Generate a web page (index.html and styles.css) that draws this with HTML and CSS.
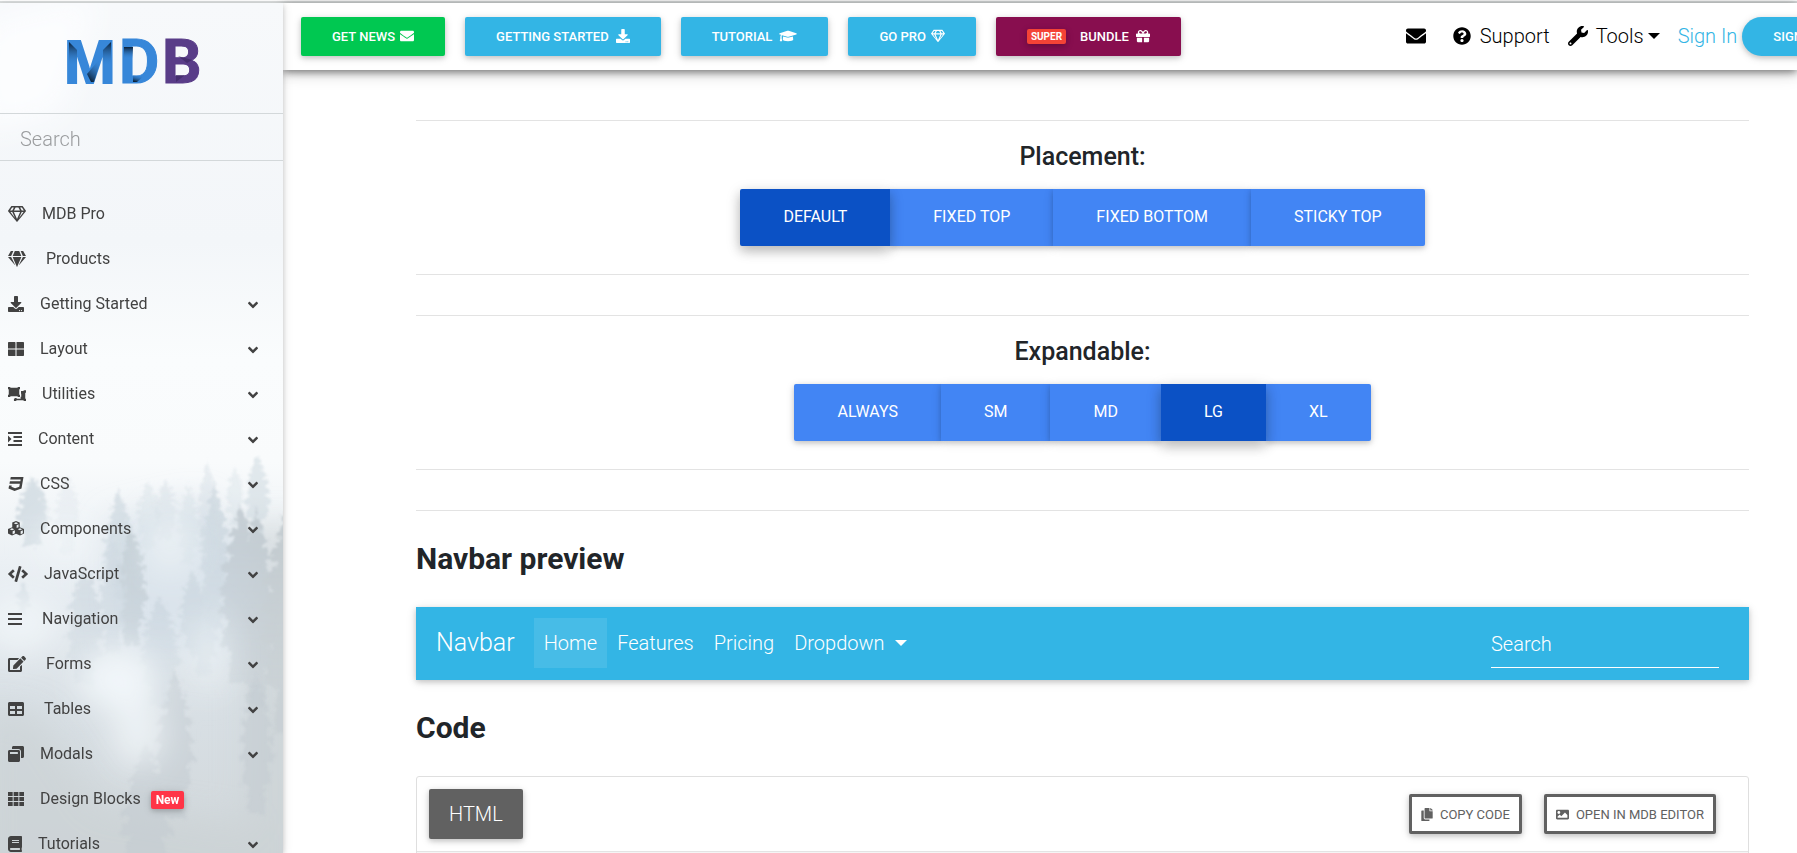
FILE: index.html
```html
<!DOCTYPE html>
<html lang="en">
<head>
<meta charset="utf-8">
<title>MDB Navbar builder</title>
<link rel="stylesheet" href="styles.css">
</head>
<body>
<svg class="sprite" aria-hidden="true">
  <symbol id="envelope" viewBox="0 0 512 512"><path d="M502.3 190.8c3.9-3.1 9.7-.2 9.7 4.7V400c0 26.500-21.500 48-48 48H48c-26.500 0-48-21.500-48-48V195.600c0-5 5.700-7.800 9.700-4.700 22.400 17.400 52.100 39.500 154.100 113.600 21.100 15.400 56.700 47.800 92.200 47.600 35.700.3 72-32.800 92.300-47.600 102-74.100 131.600-96.300 154-113.700zM256 320c23.200.4 56.600-29.200 73.400-41.400 132.700-96.300 142.800-104.700 173.400-128.700 5.800-4.500 9.200-11.500 9.200-18.900v-19c0-26.500-21.500-48-48-48H48c-26.500 0-48 21.500-48 48v19c0 7.400 3.400 14.300 9.200 18.900 30.600 23.900 40.700 32.400 173.400 128.700 16.800 12.200 50.200 41.800 73.400 41.400z"/></symbol>
  <symbol id="download" viewBox="0 0 512 512"><path d="M216 0h80c13.300 0 24 10.700 24 24v168h87.700c17.800 0 26.700 21.500 14.100 34.100L269.700 378.300c-7.500 7.500-19.800 7.500-27.300 0L90.100 226.100c-12.600-12.600-3.700-34.100 14.100-34.100H192V24c0-13.300 10.700-24 24-24zm296 376v112c0 13.300-10.700 24-24 24H24c-13.300 0-24-10.700-24-24V376c0-13.300 10.700-24 24-24h146.700l49 49c20.100 20.100 52.500 20.100 72.600 0l49-49H488c13.300 0 24 10.700 24 24zm-124 88c0-11-9-20-20-20s-20 9-20 20 9 20 20 20 20-9 20-20zm64 0c0-11-9-20-20-20s-20 9-20 20 9 20 20 20 20-9 20-20z"/></symbol>
  <symbol id="gem-line" viewBox="0 0 576 512"><path fill-rule="evenodd" d="M464 0H112c-4 0-7.700 2-9.900 5.400L1.700 152.100c-2.600 4-2.300 9.200.6 12.900l276 340.800c4.800 5.900 14.400 5.900 19.300 0L573.600 165c3-3.700 3.200-8.900.6-12.900L473.900 5.400C471.700 2 468 0 464 0zM445 48l63.400 96h-68.200l-51.500-96H445zM243.400 48h89.200l51.500 96H191.900l51.500-96zM131 48h56.300l-51.500 96H67.600L131 48zM79.500 192h57.100l86.100 193L79.500 192zM189 192h198L288 419.600 189 192zM353.300 385l86.100-193h57.100L353.300 385z"/></symbol>
  <symbol id="gem" viewBox="0 0 576 512"><path d="M485.5 0L576 160H474.900L405.700 0h79.800zm-128 0l69.200 160H149.300L218.500 0h139zm-267 0h79.800l-69.200 160H0L90.500 0zM0 192h100.700l123 251.700c1.500 3.100-2.700 5.900-5 3.300L0 192zm148.200 0h279.600l-137 318.200c-1 2.400-4.500 2.400-5.500 0L148.200 192zm204.100 251.700l123-251.700H576L357.300 446.900c-2.300 2.700-6.500-.1-5-3.200z"/></symbol>
  <symbol id="th-large" viewBox="0 0 512 512"><path d="M24 32h192a24 24 0 0 1 24 24v184H0V56a24 24 0 0 1 24-24zM272 32h216a24 24 0 0 1 24 24v184H272zM0 272h240v208H24a24 24 0 0 1-24-24zM272 272h240v184a24 24 0 0 1-24 24H272z"/></symbol>
  <symbol id="ungroup" viewBox="0 0 576 512"><path d="M0 32h74v24h236V32h74v74h-24v172h24v74h-74v-24H74v24H0v-74h24V106H0zM416 160h84v-24h76v76h-24v192h24v76h-76v-24H266v24h-76v-76h24v-20h62v20h128v-64h20V248h-8z"/></symbol>
  <symbol id="indent" viewBox="0 0 448 512"><path d="M0 32h448v64H0zM176 160h272v64H176zM176 288h272v64H176zM0 416h448v64H0zM0 144l112 112L0 368z"/></symbol>
  <symbol id="css3" viewBox="0 0 480 512"><path d="M480 32l-64 368-223.300 80L0 400l19.600-94.800h82l-8 40.600L210 390.200l134.100-44.400 18.800-97.100H29.500l16-82h333.700l10.500-52.700H56.300l16.300-82H480z"/></symbol>
  <symbol id="cubes" viewBox="0 0 512 512"><path fill-rule="evenodd" d="M256 0l120 48v150l136 54v150l-128 64-128-60-128 60L0 402V252l136-54V48zM256 42l-72 28 72 30 72-30zM276 132v94l62-28V106zM128 234l-72 28 72 30 72-30zM148 326v98l72-36v-92zM384 234l-72 28 72 30 72-30zM404 326v98l72-36v-92z"/></symbol>
  <symbol id="code" viewBox="0 0 640 512"><path d="M278.900 511.500l-61-17.700c-6.400-1.800-10-8.500-8.200-14.900L346.200 8.700c1.800-6.400 8.500-10 14.900-8.200l61 17.700c6.400 1.800 10 8.500 8.200 14.900L293.800 503.300c-1.900 6.400-8.500 10.100-14.900 8.200zm-114-112.200l43.500-46.400c4.600-4.900 4.300-12.700-.8-17.200L117 256l90.600-79.700c5.100-4.500 5.500-12.300.8-17.200l-43.500-46.400c-4.500-4.800-12.100-5.100-17-.5L3.800 247.200c-5.100 4.700-5.100 12.800 0 17.500l144.100 135.100c4.900 4.600 12.500 4.400 17-.5zm327.200.6l144.100-135.100c5.100-4.700 5.100-12.800 0-17.500L492.100 112.100c-4.800-4.500-12.400-4.300-17 .5L431.600 159c-4.600 4.900-4.300 12.700.8 17.200L523 256l-90.600 79.700c-5.100 4.500-5.500 12.300-.8 17.200l43.500 46.400c4.500 4.900 12.100 5.100 17 .6z"/></symbol>
  <symbol id="bars" viewBox="0 0 448 512"><path d="M0 64h448v64H0zM0 224h448v64H0zM0 384h448v64H0z"/></symbol>
  <symbol id="edit" viewBox="0 0 576 512"><path d="M402.600 83.200l90.200 90.200c3.800 3.800 3.800 10 0 13.800L274.400 405.600l-92.800 10.300c-12.400 1.400-22.900-9.100-21.500-21.500l10.300-92.800L388.800 83.200c3.800-3.800 10-3.800 13.800 0zm162-22.900l-48.800-48.800c-15.200-15.200-39.900-15.200-55.200 0l-35.400 35.400c-3.800 3.800-3.800 10 0 13.800l90.200 90.200c3.800 3.800 10 3.800 13.800 0l35.400-35.400c15.200-15.300 15.200-40 0-55.200zM384 346.200V448H64V128h229.800c3.200 0 6.200-1.300 8.500-3.500l40-40c7.600-7.600 2.200-20.500-8.500-20.500H48C21.500 64 0 85.500 0 112v352c0 26.500 21.500 48 48 48h352c26.500 0 48-21.500 48-48V306.200c0-10.700-12.900-16-20.500-8.500l-40 40c-2.200 2.300-3.500 5.300-3.500 8.500z"/></symbol>
  <symbol id="table" viewBox="0 0 512 512"><path d="M464 32H48C21.500 32 0 53.500 0 80v352c0 26.500 21.500 48 48 48h416c26.500 0 48-21.500 48-48V80c0-26.500-21.500-48-48-48zM224 416H64v-96h160v96zm0-160H64v-96h160v96zm224 160H288v-96h160v96zm0-160H288v-96h160v96z"/></symbol>
  <symbol id="windows" viewBox="0 0 512 512"><path d="M512 48v288c0 26.500-21.500 48-48 48h-48V176c0-44.100-35.900-80-80-80H128V48c0-26.500 21.500-48 48-48h288c26.500 0 48 21.500 48 48zM384 176v288c0 26.500-21.500 48-48 48H48c-26.500 0-48-21.500-48-48V176c0-26.500 21.500-48 48-48h288c26.500 0 48 21.500 48 48zm-68 28c0-6.600-5.400-12-12-12H76c-6.600 0-12 5.400-12 12v52h252v-52z"/></symbol>
  <symbol id="th" viewBox="0 0 512 512"><path d="M0 32h149v128H0zM181 32h150v128H181zM363 32h149v128H363zM0 192h149v128H0zM181 192h150v128H181zM363 192h149v128H363zM0 352h149v128H0zM181 352h150v128H181zM363 352h149v128H363z"/></symbol>
  <symbol id="book" viewBox="0 0 448 512"><path d="M448 360V24c0-13.300-10.700-24-24-24H96C43 0 0 43 0 96v320c0 53 43 96 96 96h328c13.300 0 24-10.700 24-24v-16c0-7.500-3.500-14.300-8.900-18.700-4.200-15.400-4.200-59.300 0-74.700 5.400-4.300 8.900-11.100 8.900-18.600zM128 134c0-3.300 2.700-6 6-6h212c3.300 0 6 2.700 6 6v20c0 3.300-2.700 6-6 6H134c-3.300 0-6-2.700-6-6v-20zm0 64c0-3.300 2.700-6 6-6h212c3.300 0 6 2.700 6 6v20c0 3.300-2.700 6-6 6H134c-3.300 0-6-2.700-6-6v-20zm253.400 250H96c-17.700 0-32-14.300-32-32 0-17.600 14.400-32 32-32h285.400c-1.900 17.100-1.900 46.900 0 64z"/></symbol>
  <symbol id="angle" viewBox="0 0 320 512"><path d="M143 352.300L7 216.300c-9.400-9.400-9.400-24.600 0-33.900l22.600-22.600c9.400-9.400 24.600-9.400 33.900 0l96.400 96.400 96.400-96.400c9.400-9.400 24.600-9.400 33.900 0l22.600 22.600c9.400 9.400 9.400 24.600 0 33.900l-136 136c-9.200 9.400-24.400 9.400-33.800 0z"/></symbol>
  <symbol id="cap" viewBox="0 0 640 512"><path d="M622.300 153.200L343.400 67.500c-15.200-4.700-31.600-4.700-46.800 0L17.700 153.200c-23.500 7.200-23.500 38.400 0 45.600l48.600 14.900c-10.700 13.200-17.200 29.300-17.900 46.900C38.800 266.200 32 276.100 32 288c0 10.800 5.700 19.900 13.900 25.700L20.300 428.500C18.100 438.500 25.700 448 35.900 448h56.100c10.200 0 17.800-9.500 15.600-19.500L82.100 313.700C90.300 307.900 96 298.800 96 288c0-11.600-6.500-21.300-15.700-26.900.8-15 8.400-28.300 20.700-36.700L296.600 284.500c9.100 2.800 26.400 6.300 46.800 0l279-85.700c23.500-7.200 23.500-38.400 0-45.600zM352.800 315.100c-28.500 8.800-52.800 3.900-65.600 0l-145-44.600L128 384c0 35.400 86 64 192 64s192-28.600 192-64l-14.200-113.500-145 44.600z"/></symbol>
  <symbol id="gift" viewBox="0 0 512 512"><path d="M32 448c0 17.700 14.300 32 32 32h160V320H32v128zm256 32h160c17.700 0 32-14.300 32-32V320H288v160zm192-320h-42.100c6.200-12.100 10.100-25.500 10.100-40 0-48.500-39.500-88-88-88-41.600 0-68.500 21.300-103 68.300-34.500-47-61.400-68.300-103-68.300-48.500 0-88 39.500-88 88 0 14.500 3.800 27.900 10.100 40H32c-17.700 0-32 14.300-32 32v80c0 8.800 7.200 16 16 16h480c8.800 0 16-7.200 16-16v-80c0-17.700-14.300-32-32-32zm-326.100 0c-22.100 0-40-17.900-40-40s17.900-40 40-40c19.900 0 34.600 3.300 86.100 80h-86.100zm206.100 0h-86.100c51.400-76.500 65.700-80 86.100-80 22.100 0 40 17.900 40 40s-17.900 40-40 40z"/></symbol>
  <symbol id="help" viewBox="0 0 512 512"><path d="M504 256c0 137-111 248-248 248S8 393 8 256C8 119.100 119 8 256 8s248 111.100 248 248zM262.700 90c-54.500 0-89.300 23-116.500 63.800-3.500 5.300-2.400 12.400 2.700 16.300l34.700 26.300c5.200 3.900 12.600 3 16.700-2.100 17.900-22.700 30.100-35.800 57.300-35.800 20.400 0 45.700 13.100 45.700 33 0 15-12.400 22.700-32.500 34C247.100 238.500 216 254.900 216 296v4c0 6.600 5.400 12 12 12h56c6.600 0 12-5.400 12-12v-1.300c0-28.500 83.200-29.600 83.200-106.700 0-58-60.200-102-116.500-102zM256 338c-25.400 0-46 20.600-46 46s20.600 46 46 46 46-20.600 46-46-20.600-46-46-46z"/></symbol>
  <symbol id="wrench" viewBox="0 0 512 512"><path d="M507.700 109.100c-2.200-9-13.500-12.100-20.100-5.500l-74.400 74.400-67.900-11.300L334 98.800l74.400-74.400c6.600-6.600 3.400-17.900-5.700-20.200-47.400-11.700-99.600.9-136.600 37.900-39.600 39.600-50.500 97.100-34 147.200L18.700 402.800c-25 25-25 65.500 0 90.500s65.500 25 90.500 0l213.200-213.200c50.100 16.700 107.500 5.700 147.400-34.200 37.100-37.100 49.700-89.300 37.900-136.800zM64 472c-13.300 0-24-10.800-24-24 0-13.300 10.800-24 24-24s24 10.700 24 24c0 13.200-10.800 24-24 24z"/></symbol>
  <symbol id="copy" viewBox="0 0 448 512"><path d="M320 448v40c0 13.300-10.700 24-24 24H24c-13.300 0-24-10.700-24-24V120c0-13.300 10.700-24 24-24h72v296c0 30.900 25.100 56 56 56h168zm0-344V0H152c-13.300 0-24 10.700-24 24v368c0 13.300 10.700 24 24 24h272c13.300 0 24-10.700 24-24V128H344c-13.200 0-24-10.800-24-24zm121-31L375 7a24 24 0 0 0-17-7h-6v96h96v-6a24 24 0 0 0-7-17z"/></symbol>
  <symbol id="image" viewBox="0 0 512 512"><path d="M464 448H48c-26.500 0-48-21.500-48-48V112c0-26.500 21.500-48 48-48h416c26.500 0 48 21.500 48 48v288c0 26.500-21.500 48-48 48zM112 120c-30.900 0-56 25.100-56 56s25.100 56 56 56 56-25.100 56-56-25.100-56-56-56zM64 384h384V272l-87.500-87.500c-4.700-4.700-12.300-4.700-17 0L208 320l-55.500-55.500c-4.700-4.700-12.300-4.700-17 0L64 336v48z"/></symbol>
  <symbol id="tree" viewBox="0 0 60 100" preserveAspectRatio="none"><path d="M30 0l3 7 7 3-5 2 11 6-8 1 13 8-10 2 15 8-11 3 13 9-11 1 12 12-13 2 7 14-12 4 3 18H17l3-18-12-3 8-15-12-2 11-11-10-2 12-9-10-3 14-8-9-2 12-8-7-1 10-6-5-2 6-3z"/></symbol>
</svg>

<div class="shell">
  <aside class="sidebar">
    <svg class="forest" viewBox="0 0 283 850" preserveAspectRatio="xMidYMid slice" aria-hidden="true">
      <defs>
        <linearGradient id="sky" x1="0" y1="0" x2="0" y2="1">
          <stop offset="0" stop-color="#f7f9fb"/><stop offset=".28" stop-color="#f3f6f9"/>
          <stop offset=".42" stop-color="#fafcfd"/><stop offset=".54" stop-color="#f9fbfc"/>
          <stop offset=".7" stop-color="#e6ecf1"/><stop offset=".84" stop-color="#d8dfe4"/>
          <stop offset="1" stop-color="#d1d7da"/>
        </linearGradient>
        <filter id="rough" x="-20%" y="-20%" width="140%" height="140%">
          <feTurbulence type="fractalNoise" baseFrequency=".2" numOctaves="3" seed="4" result="n"/>
          <feDisplacementMap in="SourceGraphic" in2="n" scale="10" xChannelSelector="R" yChannelSelector="G"/>
          <feGaussianBlur stdDeviation="1"/>
        </filter>
        <filter id="fog" x="-50%" y="-50%" width="200%" height="200%"><feGaussianBlur stdDeviation="16"/></filter>
        <linearGradient id="fade" x1="0" y1="0" x2="0" y2="1">
          <stop offset=".6" stop-color="#bbb"/><stop offset=".8" stop-color="#444"/>
        </linearGradient>
        <mask id="depth"><rect width="283" height="850" fill="url(#fade)"/></mask>
      </defs>
      <rect width="283" height="850" fill="url(#sky)"/>
      <g filter="url(#fog)">
        <path fill="#fcfdfe" d="M-20 20l120-30-40 120-80 20z"/>
        <path fill="#c9d0d4" opacity=".6" d="M245 520h60v360h-60zM-20 700l60 10 60 90 200 30v60H-20z"/>
        <path fill="#dbe4ec" d="M110 520l90-20 60 60-30 100-120-20z"/>
      </g>
      <g mask="url(#depth)"><g filter="url(#rough)" fill="#c4d0d9">
        <use href="#tree" x="12" y="473" width="40" height="70" opacity=".8"/>
        <use href="#tree" x="52" y="470" width="30" height="80" opacity=".25"/>
        <use href="#tree" x="100" y="485" width="36" height="110" opacity=".7"/>
        <use href="#tree" x="133" y="476" width="30" height="70" opacity=".35"/>
        <use href="#tree" x="151" y="476" width="28" height="60" opacity=".4"/>
        <use href="#tree" x="175" y="480" width="26" height="80" opacity=".35"/>
        <use href="#tree" x="194" y="456" width="26" height="110" opacity=".4"/>
        <use href="#tree" x="196" y="475" width="36" height="150" opacity=".8"/>
        <use href="#tree" x="242" y="451" width="30" height="80" opacity=".6"/>
        <use href="#tree" x="224" y="462" width="22" height="60" opacity=".35"/>
        <use href="#tree" x="214" y="500" width="52" height="180" fill="#b8c2c9"/>
        <use href="#tree" x="234" y="503" width="44" height="200" fill="#b8c2c9"/>
        <use href="#tree" x="254" y="490" width="70" height="240" fill="#b8c1c6"/>
        <use href="#tree" x="112" y="522" width="38" height="120" fill="#b8c4cb"/>
        <use href="#tree" x="95" y="530" width="34" height="120" opacity=".8"/>
        <use href="#tree" x="61" y="560" width="46" height="120" opacity=".9"/>
        <use href="#tree" x="15" y="580" width="16" height="30"/>
        <use href="#tree" x="176" y="566" width="32" height="80"/>
        <use href="#tree" x="186" y="582" width="34" height="90" opacity=".8"/>
        <use href="#tree" x="134" y="592" width="50" height="110"/>
      </g></g>
      <g filter="url(#rough)" fill="#c2cad0" opacity=".5">
        <use href="#tree" x="150" y="665" width="48" height="150"/>
        <use href="#tree" x="115" y="738" width="60" height="150"/>
        <use href="#tree" x="236" y="670" width="40" height="140"/>
      </g>
      <g filter="url(#fog)" fill="#f1f6f9">
        <ellipse cx="118" cy="676" rx="40" ry="30"/>
        <ellipse cx="138" cy="730" rx="26" ry="34" opacity=".8"/>
        <ellipse cx="208" cy="650" rx="16" ry="40" opacity=".6"/>
        <ellipse cx="20" cy="620" rx="40" ry="30" opacity=".8"/>
        <ellipse cx="170" cy="540" rx="26" ry="34" opacity=".6"/>
        <ellipse cx="65" cy="538" rx="26" ry="22" opacity=".8"/>
      </g>
    </svg>

    <a class="brand" href="#" aria-label="MDB">
      <svg class="logo" viewBox="0 0 132 46" aria-hidden="true">
        <defs>
          <linearGradient id="legL" x1="0" y1="0" x2="0" y2="1"><stop offset="0" stop-color="#0a2038"/><stop offset="1" stop-color="#3787d9" stop-opacity="0"/></linearGradient>
          <linearGradient id="inner" x1=".3" y1="1" x2=".8" y2="0"><stop offset="0" stop-color="#0a2038"/><stop offset=".9" stop-color="#3787d9" stop-opacity="0"/></linearGradient>
        </defs>
        <text class="logo-m" x="-3" y="45">M</text>
        <text class="logo-d" x="52" y="45">D</text>
        <text class="logo-b" x="95" y="45">B</text>
        <path fill="url(#legL)" d="M2 4l8 8v16H2zM44 4v24h-8V12z"/>
        <path fill="url(#inner)" d="M20 36l4 8h3l8-26z"/>
        <path fill="url(#legL)" d="M57 9h9v12h-9z"/>
        <path fill="url(#inner)" d="M66 37h12l-8 7h-4z"/>
        <path fill="#38245f" opacity=".6" d="M109 37h9l-9 7zM111 18l14 4-5 3z"/>
      </svg>
    </a>
    <form class="side-search"><input type="search" placeholder="Search" aria-label="Search documentation"></form>
    <nav class="side-nav" aria-label="Documentation">
      <a href="#"><svg class="w18"><use href="#gem-line"/></svg>MDB Pro</a>
      <a href="#" class="spaced"><svg class="w18"><use href="#gem"/></svg>Products</a>
      <a href="#"><svg class="w16"><use href="#download"/></svg>Getting Started<svg class="arrow"><use href="#angle"/></svg></a>
      <a href="#"><svg class="w16"><use href="#th-large"/></svg>Layout<svg class="arrow"><use href="#angle"/></svg></a>
      <a href="#"><svg class="w18"><use href="#ungroup"/></svg>Utilities<svg class="arrow"><use href="#angle"/></svg></a>
      <a href="#"><svg class="w14"><use href="#indent"/></svg>Content<svg class="arrow"><use href="#angle"/></svg></a>
      <a href="#"><svg class="w16"><use href="#css3"/></svg>CSS<svg class="arrow"><use href="#angle"/></svg></a>
      <a href="#"><svg class="w16"><use href="#cubes"/></svg>Components<svg class="arrow"><use href="#angle"/></svg></a>
      <a href="#"><svg class="w20"><use href="#code"/></svg>JavaScript<svg class="arrow"><use href="#angle"/></svg></a>
      <a href="#" class="spaced"><svg class="w14"><use href="#bars"/></svg>Navigation<svg class="arrow"><use href="#angle"/></svg></a>
      <a href="#" class="spaced"><svg class="w18"><use href="#edit"/></svg>Forms<svg class="arrow"><use href="#angle"/></svg></a>
      <a href="#" class="spaced"><svg class="w16"><use href="#table"/></svg>Tables<svg class="arrow"><use href="#angle"/></svg></a>
      <a href="#"><svg class="w16"><use href="#windows"/></svg>Modals<svg class="arrow"><use href="#angle"/></svg></a>
      <a href="#"><svg class="w16"><use href="#th"/></svg>Design Blocks<span class="badge">New</span></a>
      <a href="#"><svg class="w14"><use href="#book"/></svg>Tutorials<svg class="arrow"><use href="#angle"/></svg></a>
    </nav>
  </aside>

  <div class="page">
    <header class="topbar">
      <div class="promo">
        <a class="btn green" href="#">GET NEWS<svg><use href="#envelope"/></svg></a>
        <a class="btn wide" href="#">GETTING STARTED<svg><use href="#download"/></svg></a>
        <a class="btn wide" href="#">TUTORIAL<svg class="cap"><use href="#cap"/></svg></a>
        <a class="btn" href="#">GO PRO<svg><use href="#gem-line"/></svg></a>
        <a class="btn wide wine" href="#"><span class="super">SUPER</span>BUNDLE<svg><use href="#gift"/></svg></a>
      </div>
      <nav class="account" aria-label="Account">
        <a href="#" aria-label="Contact"><svg class="mail"><use href="#envelope"/></svg></a>
        <a href="#"><svg class="help"><use href="#help"/></svg>Support</a>
        <a href="#"><svg><use href="#wrench"/></svg>Tools<span class="caret"></span></a>
        <a class="sign-in" href="#">Sign In</a>
        <a class="btn pill" href="#">SIGN UP</a>
      </nav>
    </header>

    <main class="content">
      <section class="options">
        <h2>Placement:</h2>
        <div class="group">
          <button type="button" class="active">DEFAULT</button><button type="button">FIXED TOP</button><button type="button">FIXED BOTTOM</button><button type="button">STICKY TOP</button>
        </div>
      </section>
      <section class="options">
        <h2>Expandable:</h2>
        <div class="group">
          <button type="button">ALWAYS</button><button type="button">SM</button><button type="button">MD</button><button type="button" class="active">LG</button><button type="button">XL</button>
        </div>
      </section>
      <hr>
      <h1>Navbar preview</h1>
      <nav class="navbar" aria-label="Preview">
        <a class="name" href="#">Navbar</a>
        <a class="link current" href="#">Home</a>
        <a class="link" href="#">Features</a>
        <a class="link" href="#">Pricing</a>
        <a class="link" href="#">Dropdown<span class="caret"></span></a>
        <input type="text" placeholder="Search" aria-label="Search">
      </nav>
      <h1>Code</h1>
      <section class="code-card">
        <div class="code-head">
          <button type="button" class="tab">HTML</button>
          <div class="tools">
            <button type="button" class="outline"><svg class="copy"><use href="#copy"/></svg>COPY CODE</button>
            <button type="button" class="outline"><svg><use href="#image"/></svg>OPEN IN MDB EDITOR</button>
          </div>
        </div>
        <div class="code-body"></div>
      </section>
    </main>
  </div>
</div>
</body>
</html>
```

FILE: styles.css
```css
* { box-sizing: border-box; }
body { margin: 0; font-family: Roboto, sans-serif; font-size: 20px; font-weight: 300; color: #212529; background: #fff; }
a { color: inherit; text-decoration: none; }
button, input { font: inherit; }
svg { fill: currentColor; flex: none; }
.sprite { position: absolute; width: 0; height: 0; }

body { display: flex; flex-direction: column; height: 100vh; padding-top: 1px; overflow: hidden; }
.shell { display: flex; flex: 1; min-height: 0; border-top: 2px solid #dcdfdf; }

/* Sidebar */
.sidebar { position: relative; z-index: 2; flex: none; width: 283px; overflow: clip; overflow-clip-margin: 12px; background: #f4f7f9; color: #424242; box-shadow: 0 2px 5px rgba(0,0,0,.16), 0 2px 10px rgba(0,0,0,.12); }
.forest { position: absolute; top: 0; left: 0; width: 100%; height: 100%; z-index: -1; }
.brand { display: flex; justify-content: center; padding: 35px 18px 29px 0; border-bottom: 1px solid #d3d8da; }
.logo { width: 132px; height: 46px; overflow: visible; font-family: Roboto, sans-serif; font-weight: 700; font-size: 62px; stroke-width: 1px; }
.logo-m { font-family: "Liberation Sans", Arial, sans-serif; fill: #3787d9; stroke: #3787d9; stroke-width: 2px; }
.logo-d { fill: #3787d9; stroke: #3787d9; }
.logo-b { fill: #593d88; stroke: #593d88; }
.side-search { border-bottom: 1px solid #d3d8da; }
.side-search input { display: block; width: 100%; height: 46px; padding: 4px 20px 0; border: 0; background: transparent; outline: 0; font-weight: 300; -webkit-appearance: none; }
.side-search input::placeholder { color: #9a9c9e; }
.side-nav { padding-top: 30px; }
.side-nav a { display: flex; align-items: center; height: 45px; padding: 0 25px 0 8px; font-size: 16px; font-weight: 400; }
.side-nav svg { height: 16px; margin-right: 16px; }
.side-nav .spaced svg:first-child { margin-right: 20px; }
.w14 { width: 14px; }
.w16 { width: 16px; }
.w18 { width: 18px; }
.w20 { width: 20px; }
.side-nav .arrow { width: 10px; height: 16px; margin: 2px 0 0 auto; }
.badge { margin: 3px 0 0 10px; padding: 2px 5px; border-radius: 2px; background: #ff3547; color: #fff; font-size: 12px; line-height: 14px; font-weight: 700; box-shadow: 0 2px 5px rgba(0,0,0,.16), 0 2px 10px rgba(0,0,0,.12); }

/* Top bar */
.page { flex: 1; min-width: 0; display: flex; flex-direction: column; }
.topbar { position: relative; z-index: 1; display: flex; align-items: center; flex: none; height: 67px; padding: 0 0 1px 18px; background: #fff; white-space: nowrap; box-shadow: 0 2px 8px rgba(0,0,0,.5), 0 4px 16px rgba(0,0,0,.15); }
.promo { display: flex; gap: 20px; }
.btn { display: inline-flex; align-items: center; gap: 5px; height: 39px; padding: 0 31px; border-radius: 2px; background: #33b5e5; color: #fff; font-size: 13px; font-weight: 500; box-shadow: 0 2px 5px rgba(0,0,0,.16), 0 2px 10px rgba(0,0,0,.12); }
.btn svg { width: 14px; height: 14px; }
.btn .cap { width: 18px; }
.btn.wide { gap: 7px; }
.btn.green { background: #00c851; }
.btn.wine { background: #880e4f; }
.super { margin-right: 7px; padding: 0 4px; border-radius: 2px; background: #f44336; font-size: 10px; line-height: 15px; font-weight: 700; box-shadow: 0 2px 5px rgba(0,0,0,.16), 0 2px 10px rgba(0,0,0,.12); }
.account { display: flex; align-items: center; flex: none; margin-left: auto; margin-right: -57px; color: #000; }
.account a { display: flex; align-items: center; }
.account a:not(.btn) svg { width: 20px; height: 20px; margin-right: 8px; }
.account .mail { margin-right: 18px; }
.account .help { padding: 1px; }
.account a + a { margin-left: 18px; }
.caret { margin-left: 4px; border: 6px solid transparent; border-top-color: currentColor; border-bottom: 0; }
.account .sign-in { color: #33b5e5; }
.account .btn.pill { margin-left: 5px; border-radius: 20px; }

/* Content */
.content { padding: 50px 48px 0 133px; }
hr { margin: 0; border: 0; border-top: 1px solid #e3e3e3; }
.options { display: flex; flex-direction: column; align-items: center; height: 155px; margin-bottom: 40px; border: solid #e3e3e3; border-width: 1px 0; }
.options h2 { margin: 20px 0 16px; font-size: 25px; line-height: 32px; font-weight: 500; }
.group { display: flex; }
.group button { height: 57px; padding: 0 43px 3px; border: 0; background: #4285f4; color: #fff; font-size: 16px; font-weight: 400; box-shadow: 0 2px 5px rgba(0,0,0,.16), 0 2px 10px rgba(0,0,0,.12); }
.group button:first-child { border-radius: 2px 0 0 2px; }
.group button:last-child { border-radius: 0 2px 2px 0; }
.group .active { position: relative; background: #0b51c5; box-shadow: 0 5px 11px rgba(0,0,0,.18), 0 4px 15px rgba(0,0,0,.15); }
h1 { margin: 30px 0; font-size: 30px; line-height: 36px; font-weight: 700; }
.navbar { display: flex; align-items: center; height: 73px; padding: 0 30px 2px 20px; background: #33b5e5; color: #fff; box-shadow: 0 2px 5px rgba(0,0,0,.16), 0 2px 10px rgba(0,0,0,.12); }
.name { margin-right: 19px; font-size: 25px; }
.link { display: flex; align-items: center; height: 50px; padding: 0 10px; }
.link .caret { margin-left: 10px; }
.current { background: rgba(255,255,255,.1); }
.navbar input { width: 228px; height: 44px; margin: 7px 0 0 auto; padding: 0 0 4px; border: 0; border-bottom: 1px solid #fff; background: transparent; color: #fff; outline: 0; }
.navbar input::placeholder { color: #fff; opacity: 1; }
.code-card { border: 1px solid #dfdfdf; border-radius: 3px; }
.code-head { display: flex; align-items: center; justify-content: space-between; height: 75px; padding: 0 32px 0 12px; border-bottom: 1px solid #e4e4e4; }
.tab { height: 50px; padding: 0 20px; border: 0; border-radius: 2px; background: #616161; color: #fff; box-shadow: 0 2px 5px rgba(0,0,0,.16), 0 2px 10px rgba(0,0,0,.12); }
.tools { display: flex; gap: 22px; }
.outline { display: flex; align-items: center; gap: 7px; height: 40px; padding: 0 9px; border: 3px solid #616161; border-radius: 2px; background: #fff; color: #616161; font-size: 13px; font-weight: 400; box-shadow: 0 2px 5px rgba(0,0,0,.16), 0 2px 10px rgba(0,0,0,.12); }
.outline svg { width: 13px; height: 13px; }
.outline .copy { width: 12px; }
.code-body { height: 200px; background: #f5f5f5; }
```
